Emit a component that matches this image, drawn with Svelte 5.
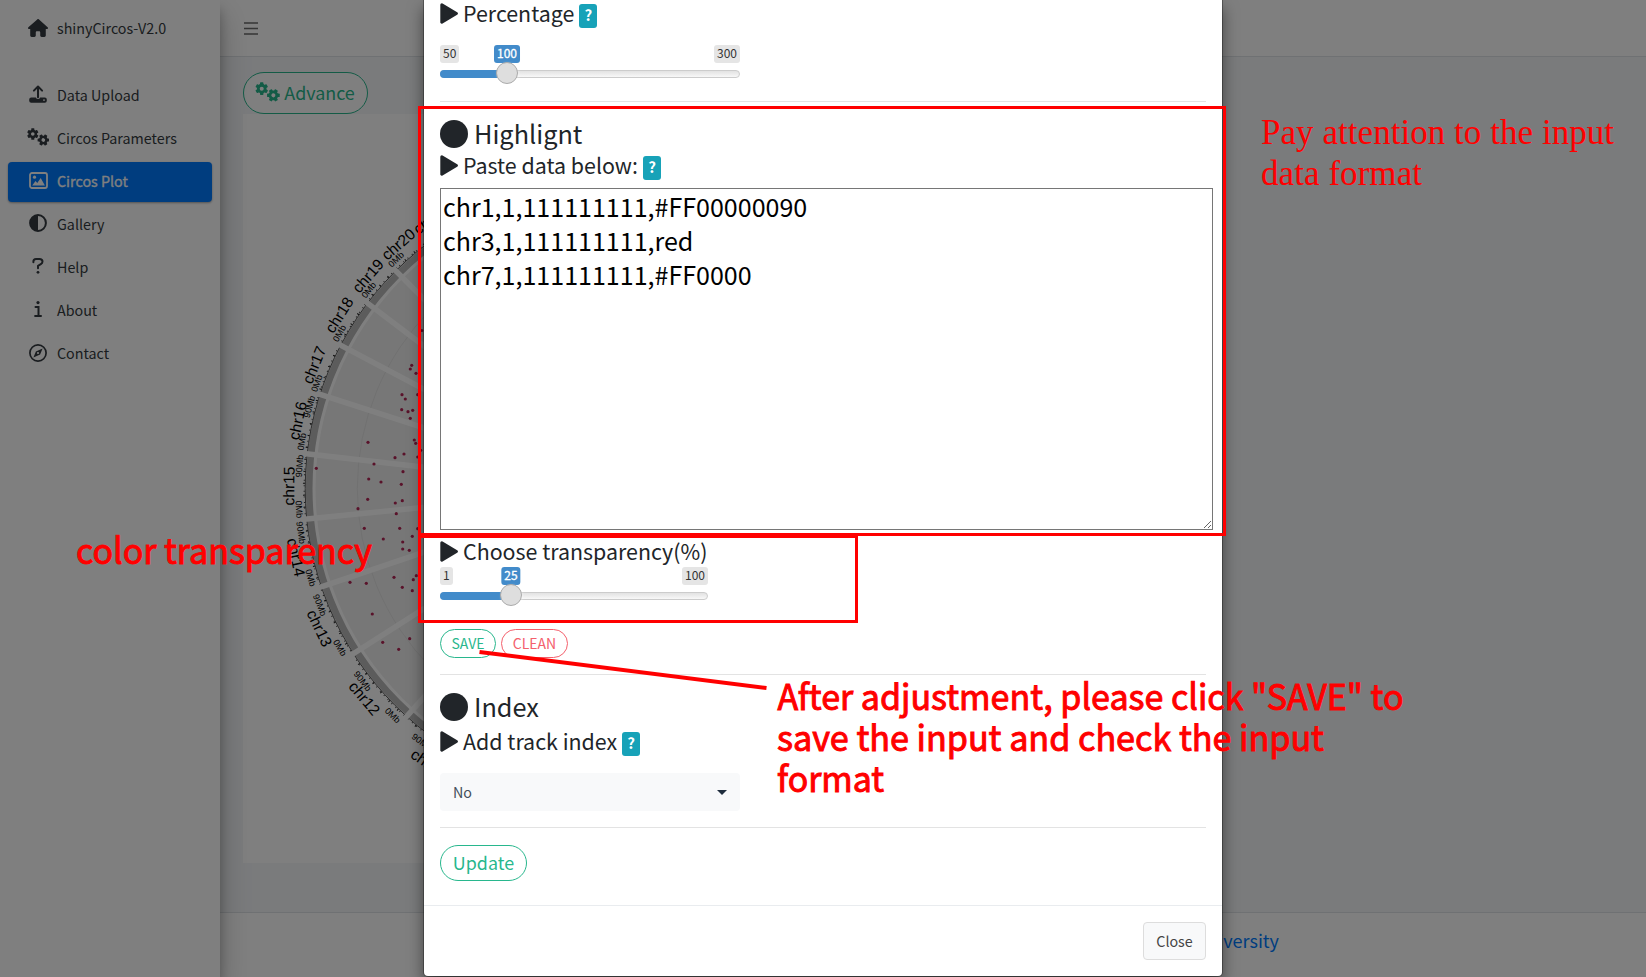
<script>
  const cx = 612, cy = 488.5;
  const nav = [
    ['upload', 'Data Upload'], ['cogs', 'Circos Parameters'], ['image', 'Circos Plot'],
    ['half', 'Gallery'], ['question', 'Help'], ['info', 'About'], ['compass', 'Contact']
  ];
  const gaps = [[395, 270], [367.7, 303.3], [342, 346], [322, 395], [308, 454], [308, 519], [324, 586], [356, 652], [407, 716]];
  const names = [
    ['chr1', 427.5, 222], ['chr20', 398.3, 244.3], ['chr19', 368, 276], ['chr18', 339.3, 315], ['chr17', 314.3, 365],
    ['chr16', 297.7, 420.7], ['chr15', 289, 486], ['chr14', 296, 557.3], ['chr13', 319.3, 628.3],
    ['chr12', 364.3, 698.3], ['chr11', 428, 763]
  ];
  const marks = [
    ['0Mb', 396, 259.3], ['0Mb', 368.7, 290], ['0Mb', 339.3, 333.3], ['0Mb', 316.7, 383.3], ['90Mb', 309.3, 406.7],
    ['0Mb', 301.7, 441.7], ['90Mb', 299.3, 466], ['0Mb', 299.3, 509.3], ['90Mb', 301, 532.7], ['0Mb', 310.7, 577.7],
    ['90Mb', 320, 605], ['0Mb', 340, 647.7], ['90Mb', 362.7, 681], ['0Mb', 392.7, 715.3], ['90Mb', 422, 742]
  ];
  const dots = [
    [411.7,365.3],[410.3,369],[416,373.3],[402,394.7],[405.3,399],[401.7,409.7],[408,411.7],[412.7,410.3],[410.3,418.3],
    [414.3,440],[415.7,443.3],[368,442.3],[404,454],[395,457.7],[374,464],[316.3,468.3],[403,471.7],[368.7,479],[381,482],
    [401.3,484.3],[417.7,394.7],[417.7,457],[421.8,330.5],[420.7,450.3],[367.7,499.3],[395.3,503],[402.3,500.7],[358,508.7],
    [396.3,513.7],[364.3,528.3],[399.7,528.3],[383.3,539],[412.3,536.3],[402.7,542],[402.7,549],[409.3,550.3],[417.7,528.7],
    [350,582.3],[366.3,583.3],[394,577.3],[413.3,579.7],[416.3,575.7],[402.3,587.3],[412.3,590.7],[372.3,614],[382.7,642.3],
    [398.7,649.3],[409.7,638.7]
  ];
  function turn(x, y) {
    const a = Math.atan2(y - cy, x - cx) * 180 / Math.PI;
    return y < cy ? a + 90 : a - 90;
  }
  let data = $state('chr1,1,111111111,#FF00000090\nchr3,1,111111111,red\nchr7,1,111111111,#FF0000');
</script>

{#snippet gear(x, y, r, rot)}
  <g transform="translate({x} {y}) rotate({rot})">
    {#each [0, 60, 120, 180, 240, 300] as t}
      <rect x={-r * 0.27} y={-r} width={r * 0.54} height={r * 0.6} rx={r * 0.1} transform="rotate({t})" fill="currentColor" />
    {/each}
    <circle r={r * 0.54} fill="none" stroke="currentColor" stroke-width={r * 0.44} />
  </g>
{/snippet}

{#snippet icon(name)}
  {#if name === 'home'}
    <svg class="ico" width="20" height="18" viewBox="0 0 576 512"><path fill="currentColor" d="M575.8 255.5c0 18-15 32.1-32 32.1h-32l.7 160.2c0 2.7-.2 5.4-.5 8.1V472c0 22.1-17.9 40-40 40H392c-22.1 0-40-17.9-40-40V384c0-17.7-14.3-32-32-32H256c-17.7 0-32 14.3-32 32v88c0 22.1-17.9 40-40 40H104c-22.1 0-40-17.9-40-40V287.6H32c-18 0-32-14-32-32.1c0-9 3-17 10-24L266.4 8c7-7 15-8 22-8s15 2 21 7L564.8 231.5c8 7 12 15 11 24z" /></svg>
  {:else if name === 'upload'}
    <svg class="ico" width="18" height="18" viewBox="0 0 18 18"><path d="M9 12.3V1.6M4.9 5.6 9 1.5l4.1 4.1" fill="none" stroke="currentColor" stroke-width="2" stroke-linecap="round" stroke-linejoin="round" /><path fill="currentColor" fill-rule="evenodd" d="M2.2 12.4h4.7a2.2 2.2 0 0 0 4.2 0h4.7a2 2 0 0 1 2 2v1.3a2 2 0 0 1-2 2H2.2a2 2 0 0 1-2-2v-1.3a2 2 0 0 1 2-2zM15 14.2a.9.9 0 1 0 0 1.8.9.9 0 0 0 0-1.8z" /></svg>
  {:else if name === 'cogs'}
    <svg class="ico" width="22" height="18" viewBox="0 0 22 18">{@render gear(5.8, 6, 5.7, 0)}{@render gear(16.3, 12, 5.7, 30)}</svg>
  {:else if name === 'image'}
    <svg class="ico" width="19" height="17" viewBox="0 0 19 17"><rect x="1" y="1" width="17" height="15" rx="2" fill="none" stroke="currentColor" stroke-width="1.8" /><circle cx="5.5" cy="5.2" r="1.6" fill="currentColor" /><path d="M3.2 13.5 6.5 9l1.8 2 3.4-5 4.2 7.5z" fill="currentColor" /></svg>
  {:else if name === 'half'}
    <svg class="ico" width="18" height="18" viewBox="0 0 18 18"><circle cx="9" cy="9" r="7.9" fill="none" stroke="currentColor" stroke-width="2" /><path d="M9 1a8 8 0 0 0 0 16z" fill="currentColor" /></svg>
  {:else if name === 'question'}
    <svg class="ico" width="12" height="18" viewBox="0 0 12 18"><path d="M1.4 5.2V4.5C1.4 2.8 2.5 1.9 4 1.9h3.4c1.8 0 3.1 1 3.1 2.7 0 1.3-.7 2-1.700 2.600L6 8.900V11.300" fill="none" stroke="currentColor" stroke-width="2" stroke-linecap="round" stroke-linejoin="round" /><circle cx="6" cy="15.300" r="1.400" fill="currentColor" /></svg>
  {:else if name === 'info'}
    <svg class="ico" width="8" height="18" viewBox="0 0 8 18"><circle cx="4" cy="2.600" r="1.600" fill="currentColor" /><path d="M1.500 7H4.500V15.800M1.100 16H7" fill="none" stroke="currentColor" stroke-width="2" stroke-linecap="round" /></svg>
  {:else}
    <svg class="ico" width="18" height="18" viewBox="0 0 18 18"><circle cx="9" cy="9" r="8.100" fill="none" stroke="currentColor" stroke-width="1.700" /><path fill="currentColor" fill-rule="evenodd" d="M13.600 4.400 11.100 10.600 4.400 13.600 6.900 7.400zM9 7.900a1.100 1.100 0 1 0 0 2.200 1.100 1.100 0 0 0 0-2.200z" /></svg>
  {/if}
{/snippet}

{#snippet label(text, help)}
  <div class="label">
    <svg width="18" height="21" viewBox="0 0 18 21"><path d="M1.800 1.800 16.400 10.500 1.800 19.200z" fill="currentColor" stroke="currentColor" stroke-width="3" stroke-linejoin="round" /></svg>
    <span>{text}</span>
    {#if help}<b class="help">?</b>{/if}
  </div>
{/snippet}

{#snippet slider(min, max, value, width, at)}
  <div class="slider" style="width:{width}px">
    <div class="ends"><span>{min}</span><span>{max}</span></div>
    <div class="track"><i style="width:{at}px"></i></div>
    <span class="value" style="left:{at}px">{value}</span>
    <span class="knob" style="left:{at}px"></span>
  </div>
{/snippet}

<div class="screen">
  <aside>
    <div class="brand"><span class="slot">{@render icon('home')}</span>shinyCircos-V2.0</div>
    <nav>
      {#each nav as [ic, text]}
        <div class="item" class:active={text === 'Circos Plot'}><span class="slot">{@render icon(ic)}</span>{text}</div>
      {/each}
    </nav>
  </aside>
  <main>
    <header><svg width="14" height="13" viewBox="0 0 14 13"><path d="M0 1H14M0 6.500H14M0 12H14" stroke="#6a6a6a" stroke-width="1.600" /></svg></header>
    <section>
      <button class="pill advance">{@render icon('cogs')}<span>Advance</span></button>
      <div class="plot">
        <svg width="738" height="749" viewBox="243 114 738 749">
          <circle {cx} {cy} r="296.500" fill="#efefef" />
          <circle {cx} {cy} r="254.700" fill="none" stroke="#e2e2e2" stroke-width="1" />
          <circle {cx} {cy} r="302.800" fill="none" stroke="#b8b8b8" stroke-width="6.600" />
          <circle {cx} {cy} r="306.800" fill="none" stroke="#333" stroke-width=".800" />
          <circle {cx} {cy} r="307.800" fill="none" stroke="#444" stroke-width="1.200" stroke-dasharray="1 4.600" />
          <circle {cx} {cy} r="308" fill="none" stroke="#222" stroke-width="2.200" stroke-dasharray="1 11" />
          {#each gaps as [x, y]}
            <line x1={x - (cx - x) * 0.02} y1={y - (cy - y) * 0.02} x2={cx} y2={cy} stroke="#fff" stroke-width="5.500" />
          {/each}
          {#each dots as [x, y]}<circle cx={x} cy={y} r="1.600" fill="#b32555" />{/each}
          {#each names as [t, x, y]}<text class="chr" transform="translate({x} {y}) rotate({turn(x, y)})" dy="5.300">{t}</text>{/each}
          {#each marks as [t, x, y]}<text class="mb" transform="translate({x} {y}) rotate({turn(x, y)})" dy="3.200">{t}</text>{/each}
        </svg>
      </div>
    </section>
    <footer>University</footer>
  </main>
</div>
<div class="backdrop"></div>

<div class="modal">
  <div class="body">
    {@render label('Percentage', true)}
    <div class="g19"></div>
    {@render slider(50, 300, 100, 300, 67)}
    <hr class="first" />
    <h3><i></i>Highlignt</h3>
    <div class="g4"></div>
    {@render label('Paste data below:', true)}
    <textarea bind:value={data} spellcheck="false"></textarea>
    {@render label('Choose transparency(%)', false)}
    <div class="g3"></div>
    {@render slider(1, 100, 25, 268, 71)}
    <div class="actions"><button class="pill small">SAVE</button><button class="pill small red">CLEAN</button></div>
    <hr />
    <h3><i></i>Index</h3>
    <div class="g7"></div>
    {@render label('Add track index', true)}
    <div class="select"><span>No</span><svg width="10" height="5" viewBox="0 0 10 5"><path d="M0 0H10L5 5z" fill="#1f2d3d" /></svg></div>
    <hr />
    <button class="pill update">Update</button>
  </div>
  <div class="foot"><button class="close">Close</button></div>
</div>

<svg class="notes" width="1646" height="977" viewBox="0 0 1646 977">
  <g fill="none" stroke="#f00" stroke-width="3">
    <rect x="419.500" y="107.500" width="805" height="427" />
    <rect x="419.500" y="536.500" width="437" height="85" />
    <path d="M479.500 652 766.500 688" stroke-width="4" />
  </g>
  <g class="red-text">
    <text x="76" y="564" textLength="296" lengthAdjust="spacingAndGlyphs">color transparency</text>
    <text x="777.500" y="710.300" textLength="626" lengthAdjust="spacingAndGlyphs">After adjustment, please click "SAVE" to</text>
    <text x="777" y="751.300" textLength="547" lengthAdjust="spacingAndGlyphs">save the input and check the input</text>
    <text x="777" y="792.300" textLength="107" lengthAdjust="spacingAndGlyphs">format</text>
  </g>
  <g class="serif-text">
    <text x="1261" y="144" textLength="353" lengthAdjust="spacing">Pay attention to the input</text>
    <text x="1261" y="185" textLength="161" lengthAdjust="spacing">data format</text>
  </g>
</svg>

<style>
  :global(body) { overflow: hidden; }
  * { box-sizing: border-box; }
  .screen, .modal, .notes { font-family: "Noto Sans CJK SC", "Noto Sans", sans-serif; }
  button, textarea { font-family: inherit; margin: 0; }
  .screen { display: flex; width: 1646px; height: 977px; color: #343a40; font-size: 14.3px; }
  aside { width: 220px; background: #fff; position: relative; z-index: 1; box-shadow: 0 14px 28px rgba(0,0,0,.25), 0 10px 10px rgba(0,0,0,.22); }
  .brand { height: 57px; padding: 0 0 2px 19px; display: flex; align-items: center; }
  .slot { width: 38px; display: flex; justify-content: center; flex: none; }
  .ico { display: block; flex: none; }
  nav { padding: 18.500px 8px 0; display: flex; flex-direction: column; gap: 3.100px; }
  .item { height: 40px; padding: 0 0 3px 11px; display: flex; align-items: center; border-radius: 4px; }
  .active { background: #007bff; color: #fff; box-shadow: 0 1px 3px rgba(0,0,0,.12), 0 1px 2px rgba(0,0,0,.24); -webkit-text-stroke: .3px #fff; }
  main { flex: 1; display: flex; flex-direction: column; background: #f4f6f9; min-width: 0; }
  header { height: 57px; background: #fff; border-bottom: 1px solid #dee2e6; padding-left: 24px; display: flex; align-items: center; }
  section { flex: 1; padding: 15px 23px 0; }
  .plot { width: 738px; height: 749px; background: #fff; }
  .plot svg { display: block; }
  .chr, .mb { font-family: "Liberation Sans", Arial, sans-serif; text-anchor: middle; fill: #000; }
  .chr { font-size: 15.500px; }
  .mb { font-size: 9px; }
  footer { height: 65px; background: #fff; border-top: 1px solid #dee2e6; color: #007bff; font-size: 18px; padding: 13px 367px 0 0; line-height: 28px; text-align: right; }
  .pill { border: 1px solid #28b78d; color: #28b78d; background: #fff; border-radius: 50px; padding: 0 0 2px; display: flex; align-items: center; justify-content: center; white-space: nowrap; }
  .advance { width: 125px; height: 42px; font-size: 17.900px; gap: 4px; padding-right: 1px; }
  .advance :global(svg) { width: 25px; height: 20px; }
  .backdrop { position: absolute; inset: 0 auto auto 0; width: 1646px; height: 977px; background: rgba(0,0,0,.5); z-index: 2; }
  .modal { position: absolute; left: 424px; top: 0; width: 798px; height: 976px; z-index: 3; background: #fff; border-radius: 0 0 4px 4px; box-shadow: 0 8px 16px rgba(0,0,0,.5), 0 0 0 1px rgba(0,0,0,.3); color: #212529; }
  .body { height: 905px; padding: 0 16px; }
  .label { height: 26px; line-height: 26px; font-size: 21.400px; display: flex; align-items: center; white-space: nowrap; }
  .label span { margin-left: 5px; }
  .help { width: 18px; height: 24px; margin: 6px 0 0 5px; background: #17a2b8; color: #fff; border-radius: 3px; font-size: 15px; line-height: 22px; text-align: center; }
  .g19 { height: 19px; } .g4 { height: 4px; } .g3 { height: 3px; } .g7 { height: 7px; }
  .slider { position: relative; height: 39px; font-size: 12px; line-height: 15px; }
  .ends { display: flex; justify-content: space-between; }
  .ends span { background: #e5e5e5; color: #333; border-radius: 3px; height: 18px; padding: 0 3px; }
  .value { position: absolute; top: 0; height: 18px; padding: 0 3px; border-radius: 3px; transform: translateX(-50%); background: #428bca; color: #fff; -webkit-text-stroke: .3px #fff; }
  .track { height: 8px; margin-top: 7px; border: 1px solid #ccc; border-radius: 8px; background: linear-gradient(#e2e2e2, #f8f8f8); display: flex; }
  .track i { margin: -1px; height: 8px; background: #428bca; border-radius: 8px 0 0 8px; }
  .knob { position: absolute; top: 17px; width: 22px; height: 22px; margin-left: -11px; border: 1px solid #ababab; border-radius: 50%; background: #dedede; box-shadow: 1px 1px 3px rgba(255,255,255,.3); }
  hr { height: 1px; border: 0; background: #e3e3e3; margin: 16px 0; }
  hr.first { margin-top: 17px; }
  h3 { margin: 0; height: 30px; line-height: 30px; font-weight: 400; font-size: 25.300px; display: flex; align-items: center; gap: 6px; }
  h3 i { width: 28px; height: 28px; margin-top: 1px; border-radius: 50%; background: #212529; }
  textarea { display: block; width: 773px; height: 342px; margin: 10px 0 8px; border: 1px solid #767676; border-radius: 0; padding: 0 2px 2px; font-size: 25.050px; line-height: 34px; color: #000; outline: 0; background: #fff; }
  .actions { display: flex; gap: 5px; margin-top: 23px; }
  .small { width: 56px; height: 29px; font-size: 14px; }
  .red { width: 67px; border-color: #f4606c; color: #f4606c; }
  .select { width: 300px; height: 38px; margin-top: 19px; padding: 0 13px; background: #f8f9fa; border-radius: 4px; color: #444f5a; font-size: 14.300px; display: flex; align-items: center; justify-content: space-between; }
  .select span { padding-bottom: 2px; }
  .update { margin-top: 17px; width: 87px; height: 36px; font-size: 17.900px; }
  .foot { height: 71px; border-top: 1px solid #e9ecef; padding: 16px 16px 0; display: flex; justify-content: flex-end; }
  .close { width: 63px; height: 38px; padding: 0 0 2px; border: 1px solid #ddd; border-radius: 4px; background: #f8f9fa; color: #444; font-size: 14.300px; }
  .notes { position: absolute; left: 0; top: 0; z-index: 4; pointer-events: none; }
  .red-text { fill: #f00; stroke: #f00; stroke-width: 1px; font-size: 35.500px; }
  .serif-text { fill: #f00; font-family: "Liberation Serif", "Times New Roman", serif; font-size: 35px; }
</style>
